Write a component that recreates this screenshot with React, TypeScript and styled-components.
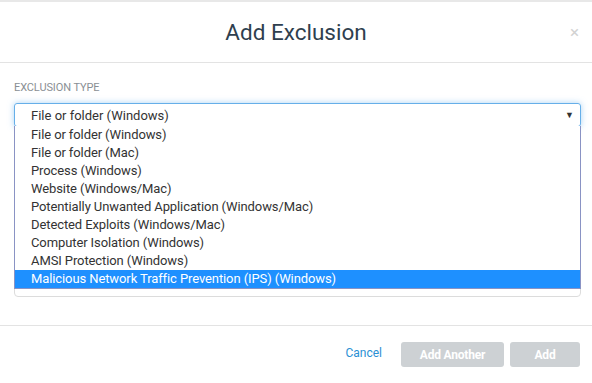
import styled, { createGlobalStyle } from "styled-components";

const GlobalStyle = createGlobalStyle`
  html, body {
    margin: 0;
    padding: 0;
    background: #ffffff;
  }
  body {
    font-family: Roboto, "Liberation Sans", sans-serif;
  }
`;

const Modal = styled.div`
  width: 592px;
  height: 383px;
  box-sizing: border-box;
  border-top: 2px solid #e8e8e8;
  display: flex;
  flex-direction: column;
  background: #fff;
`;

const Header = styled.div`
  position: relative;
  height: 60px;
  border-bottom: 1px solid #e3e3e3;
  display: flex;
  align-items: center;
  justify-content: center;
`;

const Title = styled.h2`
  margin: 0;
  font-size: 22.5px;
  font-weight: 400;
  color: #2f3f4f;
  letter-spacing: 0;
`;

const Close = styled.span`
  position: absolute;
  right: 13px;
  top: 22px;
  font-size: 17px;
  color: #d2d2d2;
  line-height: 1;
`;

const Body = styled.div`
  flex: 1;
  padding: 18px 11px 0 14px;
  border-bottom: 1px solid #e3e3e3;
`;

const Label = styled.div`
  font-size: 11px;
  color: #8a8f94;
  text-transform: uppercase;
  letter-spacing: -0.1px;
  margin-bottom: 9px;
`;

const SelectWrap = styled.div`
  position: relative;
`;

const SelectBox = styled.div`
  height: 24px;
  box-sizing: border-box;
  border: 1px solid #66afe9;
  border-radius: 3px;
  box-shadow: 0 0 6px rgba(102, 175, 233, 0.55);
  display: flex;
  align-items: center;
  justify-content: space-between;
  padding: 0 6px 0 16px;
  font-size: 13px;
  color: #333;
`;

const Caret = styled.span`
  font-size: 9px;
  color: #333;
`;

const Field = styled.div`
  height: 160px;
  margin-top: 10px;
  box-sizing: border-box;
  border: 1px solid #dcdcdc;
  border-radius: 4px;
`;

const Options = styled.ul`
  position: absolute;
  top: 23px;
  left: 0;
  right: 0;
  margin: 0;
  padding: 0;
  list-style: none;
  background: #fff;
  border: 1px solid #8a93c4;
  border-top: none;
`;

const Option = styled.li<{ $active?: boolean }>`
  height: 18px;
  line-height: 18px;
  padding-left: 16px;
  font-size: 13px;
  letter-spacing: -0.1px;
  color: ${({ $active }) => ($active ? "#fff" : "#333")};
  background: ${({ $active }) => ($active ? "#1e90ff" : "transparent")};
`;

const Footer = styled.div`
  height: 57px;
  display: flex;
  align-items: center;
  justify-content: flex-end;
  padding-right: 12px;
  gap: 6px;
`;

const LinkButton = styled.span`
  font-size: 12px;
  color: #2a8fd4;
  margin-right: 13px;
  margin-top: -4px;
`;

const Button = styled.button<{ $w: number }>`
  width: ${({ $w }) => $w}px;
  height: 25px;
  border: none;
  border-radius: 3px;
  background: #cdd1d4;
  color: #fff;
  font-family: Roboto, "Liberation Sans", sans-serif;
  font-size: 12px;
  font-weight: 700;
  letter-spacing: -0.2px;
`;

const options = [
  "File or folder (Windows)",
  "File or folder (Mac)",
  "Process (Windows)",
  "Website (Windows/Mac)",
  "Potentially Unwanted Application (Windows/Mac)",
  "Detected Exploits (Windows/Mac)",
  "Computer Isolation (Windows)",
  "AMSI Protection (Windows)",
  "Malicious Network Traffic Prevention (IPS) (Windows)",
];

export default function App() {
  return (
    <>
      <GlobalStyle />
      <Modal>
        <Header>
          <Title>Add Exclusion</Title>
          <Close>×</Close>
        </Header>
        <Body>
          <Label>Exclusion Type</Label>
          <SelectWrap>
            <SelectBox>
              <span>File or folder (Windows)</span>
              <Caret>▼</Caret>
            </SelectBox>
            <Field />
            <Options>
              {options.map((o, i) => (
                <Option key={o} $active={i === options.length - 1}>
                  {o}
                </Option>
              ))}
            </Options>
          </SelectWrap>
        </Body>
        <Footer>
          <LinkButton>Cancel</LinkButton>
          <Button $w={103}>Add Another</Button>
          <Button $w={70}>Add</Button>
        </Footer>
      </Modal>
    </>
  );
}
